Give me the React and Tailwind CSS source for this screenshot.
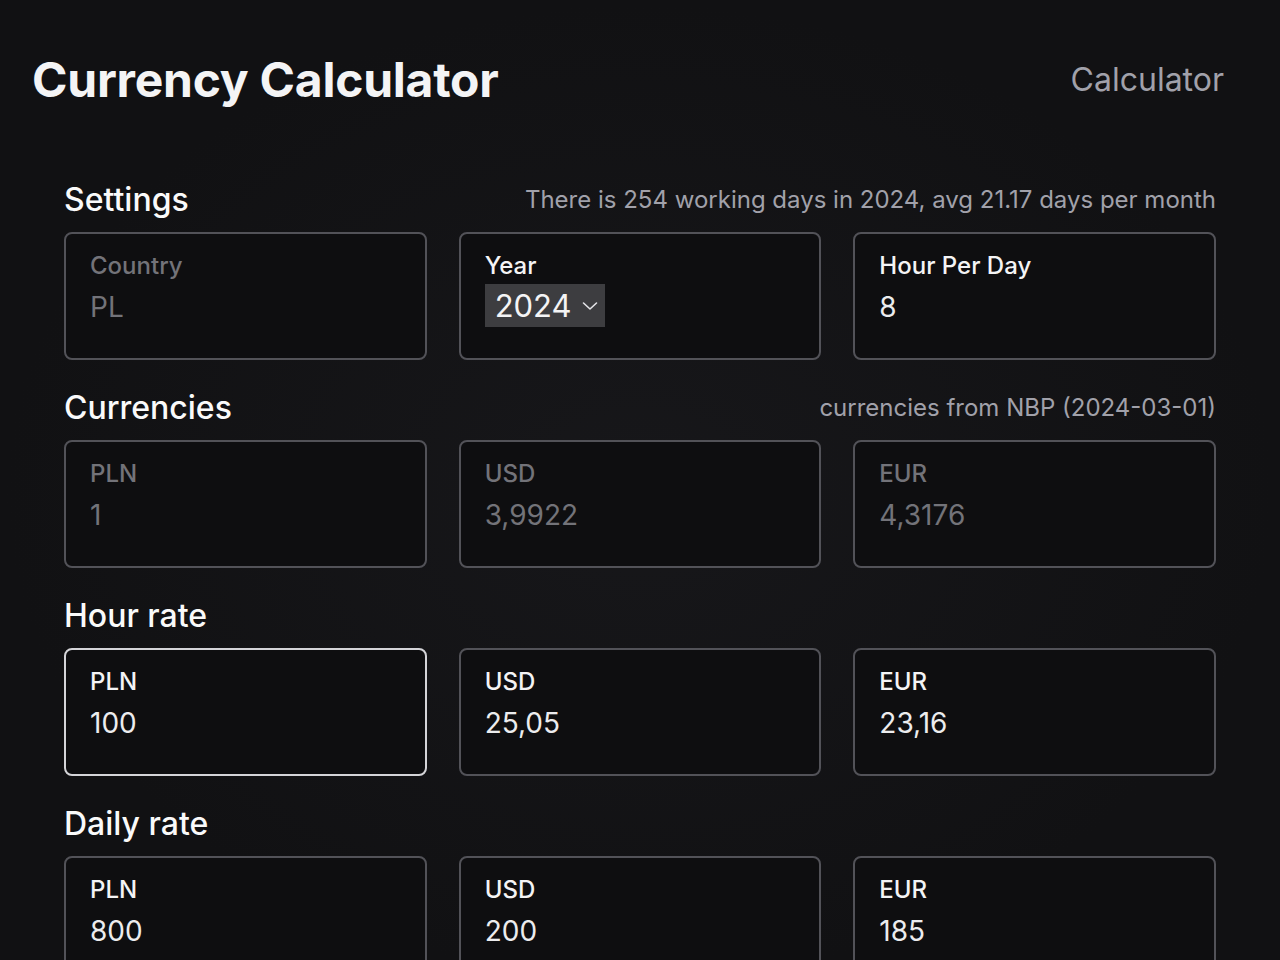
import React from "react";

function Card({ label, value, disabled, focused, children }) {
  const border = focused ? "border-[#d4d4d8]" : "border-[#525258]";
  const labelColor = disabled ? "text-[#737379]" : "text-[#f4f4f5]";
  const valueColor = disabled ? "text-[#737379]" : "text-[#ececee]";
  return (
    <div
      className={`h-[128px] rounded-lg border-2 ${border} bg-[#0e0e10] pt-4 px-6 flex flex-col`}
    >
      <div className={`text-2xl leading-8 font-medium ${labelColor}`}>{label}</div>
      {children ? (
        children
      ) : (
        <div className={`mt-[7px] text-[28px] leading-9 ${valueColor}`}>{value}</div>
      )}
    </div>
  );
}

function Section({ title, info, children }) {
  return (
    <section>
      <div className="flex items-center justify-between mb-3.5">
        <h2 className="text-[32px] leading-9 font-medium text-[#fafafa]">{title}</h2>
        {info && <div className="text-2xl leading-8 text-[#a1a1aa]">{info}</div>}
      </div>
      <div className="grid grid-cols-3 gap-8">{children}</div>
    </section>
  );
}

export default function App() {
  return (
    <div className="min-h-screen bg-[radial-gradient(ellipse_at_center,#17171a_0%,#111113_70%)] font-[family-name:Inter,sans-serif] overflow-hidden">
      <header className="flex items-center justify-between pl-8 pr-14 pt-14">
        <h1 className="text-5xl leading-none font-bold tracking-[-0.25px] text-[#f4f4f5]">Currency Calculator</h1>
        <nav className="text-[32px] leading-9 text-[#a1a1aa]">Calculator</nav>
      </header>
      <main className="px-16 pt-[78px] flex flex-col gap-[30px]">
        <Section title="Settings" info="There is 254 working days in 2024, avg 21.17 days per month">
          <Card label="Country" value="PL" disabled />
          <Card label="Year">
            <div className="mt-0.5 h-[43px] self-start bg-[#3d3d40] flex items-center pl-[10px] pr-[7px] gap-2.5 text-[31px] leading-9 text-[#f4f4f5]">
              <span>2024</span>
              <svg width="16" height="10" viewBox="0 0 16 10" fill="none" stroke="#e4e4e7" strokeWidth="1.6" strokeLinecap="round" strokeLinejoin="round">
                <path d="M1.5 2 L8 8 L14.5 2" />
              </svg>
            </div>
          </Card>
          <Card label="Hour Per Day" value="8" />
        </Section>
        <Section title="Currencies" info="currencies from NBP (2024-03-01)">
          <Card label="PLN" value="1" disabled />
          <Card label="USD" value="3,9922" disabled />
          <Card label="EUR" value="4,3176" disabled />
        </Section>
        <Section title="Hour rate">
          <Card label="PLN" value="100" focused />
          <Card label="USD" value="25,05" />
          <Card label="EUR" value="23,16" />
        </Section>
        <Section title="Daily rate">
          <Card label="PLN" value="800" />
          <Card label="USD" value="200" />
          <Card label="EUR" value="185" />
        </Section>
      </main>
    </div>
  );
}
